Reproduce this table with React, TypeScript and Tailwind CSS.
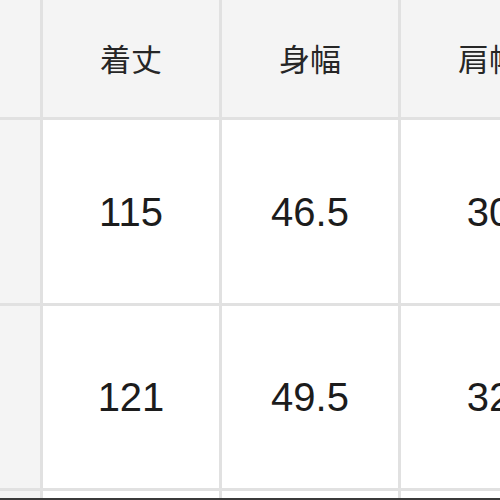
const headers = ["", "着丈", "身幅", "肩幅"];

const rows = [
  ["", "115", "46.5", "30"],
  ["", "121", "49.5", "32"],
];

export default function App() {
  return (
    <div className="flex h-[500px] w-[500px] flex-col overflow-hidden bg-white font-['Liberation_Sans','Noto_Sans_CJK_JP',sans-serif] text-[#1c1c1c]">
      <div className="grid flex-1 grid-cols-[40px_176px_176px_176px] grid-rows-[117px_183px_182px_1fr] gap-[3px] bg-[#e1e1e1]">
        {headers.map((h, i) => (
          <div
            key={`h${i}`}
            className="flex items-center justify-center bg-[#f4f4f4] text-[31px] text-[#262626] font-['Noto_Sans_CJK_JP',sans-serif]"
          >
            {h}
          </div>
        ))}
        {rows.map((row, r) =>
          row.map((cell, c) => (
            <div
              key={`${r}-${c}`}
              className={`flex items-center justify-center text-[40px] ${
                c === 0 ? "bg-[#f4f4f4]" : "bg-white"
              }`}
            >
              {cell}
            </div>
          ))
        )}
        <div className="bg-[#f4f4f4]" />
        <div className="bg-white" />
        <div className="bg-white" />
        <div className="bg-white" />
      </div>
      <div className="h-[2px] bg-[#3a3a3a]" />
    </div>
  );
}
